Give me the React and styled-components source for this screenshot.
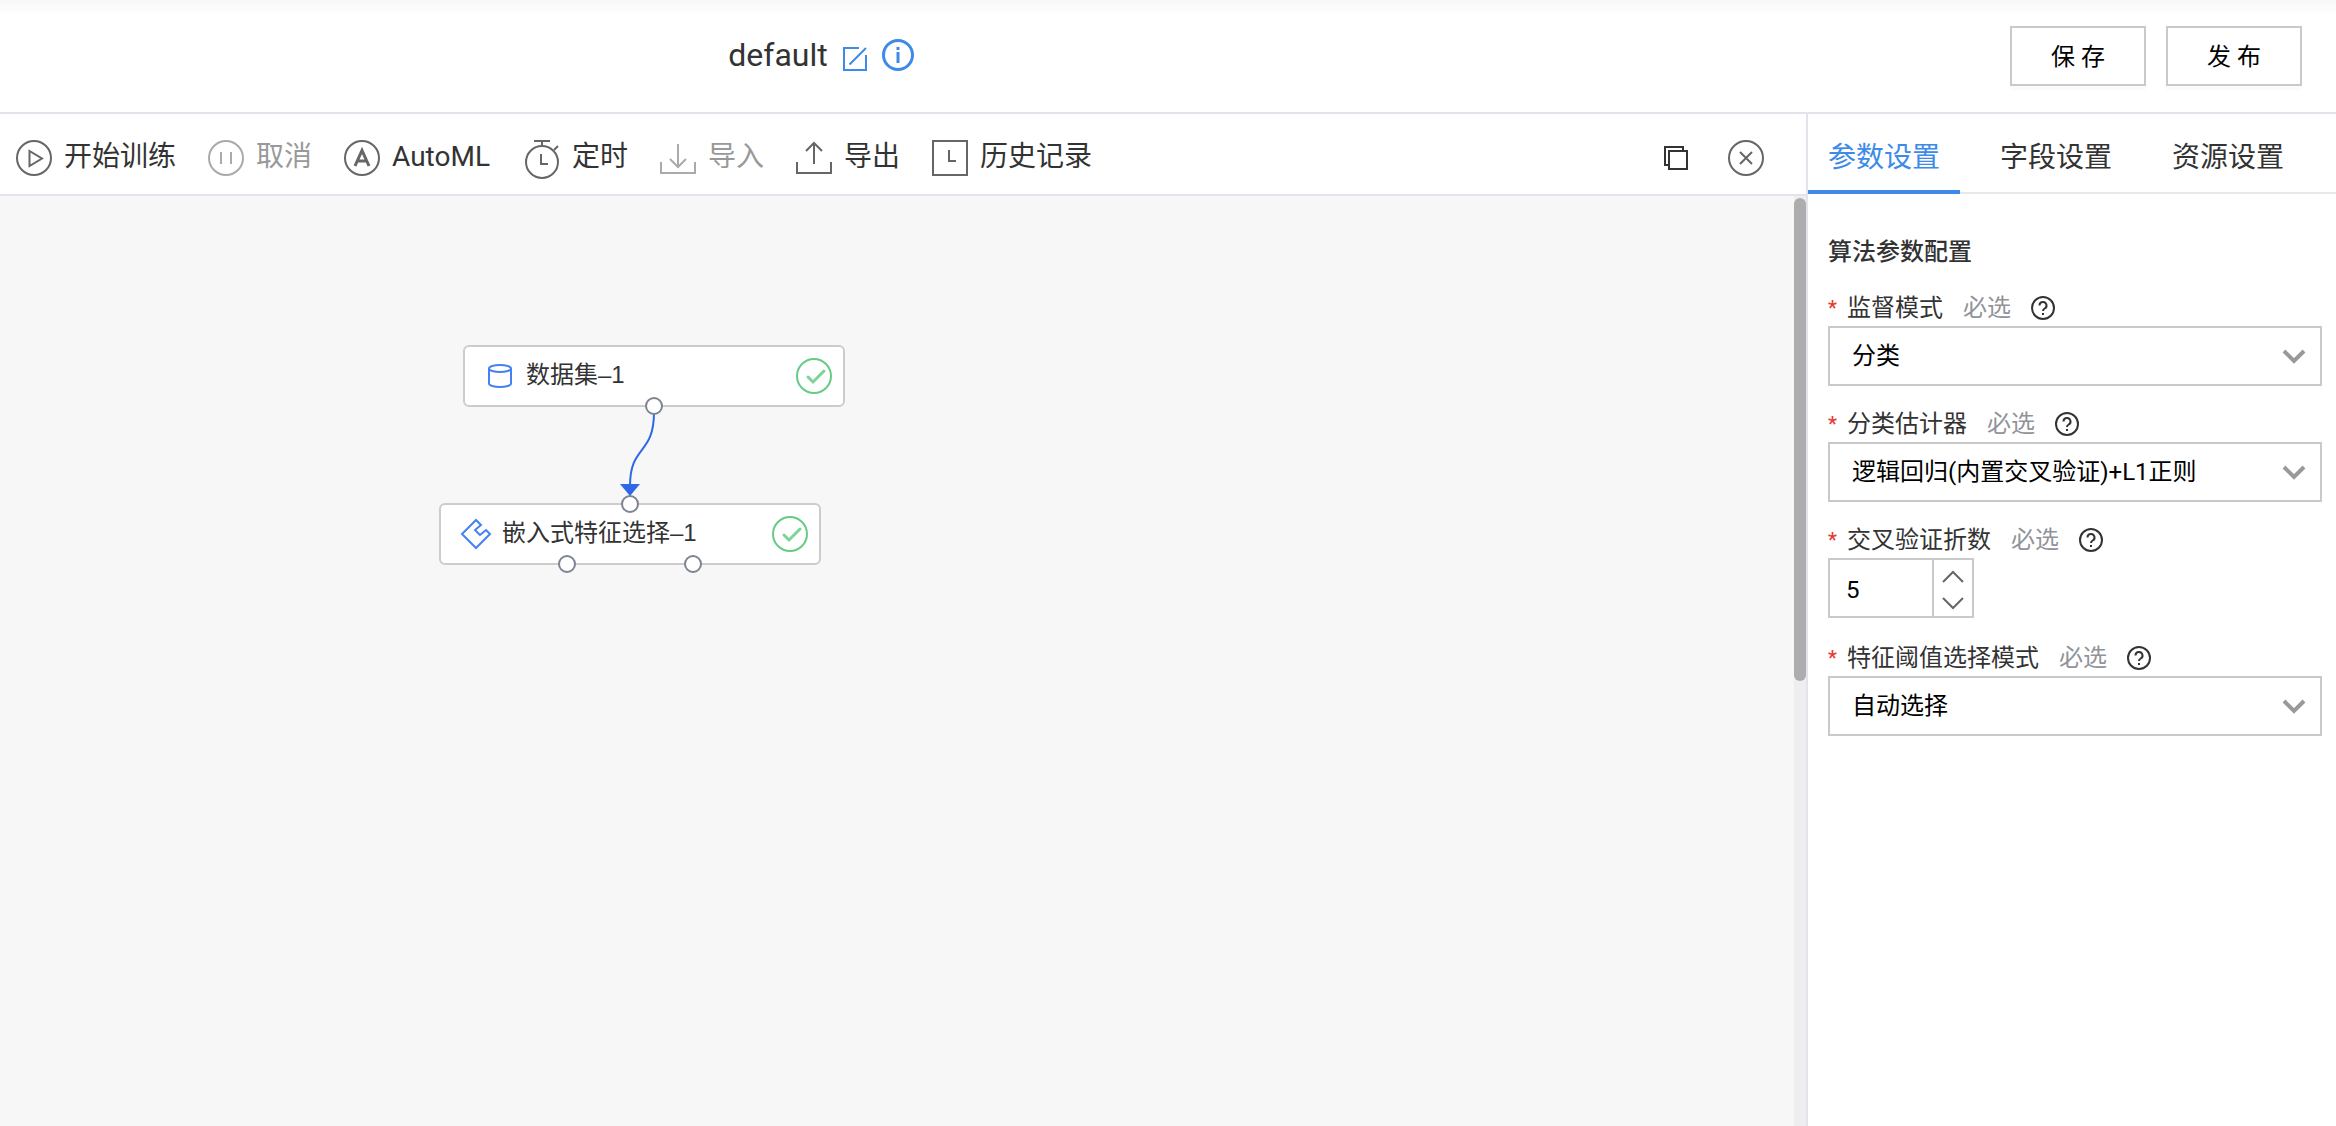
import React, { useState } from 'react';
import styled, { createGlobalStyle, css } from 'styled-components';

const GlobalStyle = createGlobalStyle`
  *, *::before, *::after {
    box-sizing: border-box;
  }

  body {
    margin: 0;
    background: #fff;
    color: #333;
    font-family: Roboto, "Noto Sans CJK SC", sans-serif;
    font-size: 24px;
  }

  button, input, select {
    font-family: inherit;
    font-size: inherit;
  }
`;

const Page = styled.div`
  display: flex;
  flex-direction: column;
  min-height: 100vh;
`;

const Header = styled.header`
  display: flex;
  align-items: center;
  height: 114px;
  border-bottom: 2px solid #e1e4eb;
  background: linear-gradient(#f7f7f7, #fff 16px);
`;

const TitleGroup = styled.div`
  display: flex;
  flex: 1;
  align-items: center;
  justify-content: center;
  padding-bottom: 2px;
`;

const Title = styled.h1`
  margin: 0 15px 0 0;
  font-size: 32px;
  font-weight: 400;
  line-height: 40px;
`;

const IconButton = styled.button`
  display: flex;
  padding: 0;
  border: 0;
  background: none;
  color: ${props => props.$color || '#666'};
  cursor: pointer;
`;

const TitleIcons = styled.div`
  display: flex;
  align-items: flex-end;
  gap: 15px;
`;

const HeaderActions = styled.div`
  display: flex;
  flex: 0 0 694px;
  justify-content: flex-end;
  gap: 20px;
  padding-right: 34px;
`;

const ActionButton = styled.button`
  width: 136px;
  height: 60px;
  padding: 0 0 4px;
  border: 2px solid #c9c9c9;
  background: #fff;
  box-shadow: 0 4px 0 rgba(0, 0, 0, 0.016);
  color: #000;
  cursor: pointer;
`;

const Body = styled.div`
  display: flex;
  flex: 1;
`;

const Workspace = styled.main`
  display: flex;
  flex: 1;
  flex-direction: column;
  min-width: 0;
`;

const Toolbar = styled.div`
  display: flex;
  align-items: center;
  gap: 32px;
  height: 82px;
  padding: 8px 42px 0 16px;
  border-bottom: 2px solid #e1e4eb;
`;

const ToolButton = styled.button`
  display: flex;
  align-items: center;
  gap: 12px;
  padding: 0;
  border: 0;
  background: none;
  color: #333;
  font-size: 28px;
  line-height: 36px;
  white-space: nowrap;
  cursor: pointer;

  svg {
    color: #666;
  }

  span {
    min-width: ${props => (props.$wide ? '100px' : '0')};
    padding-bottom: 2px;
    text-align: left;
  }

  &:disabled {
    color: #999;
    cursor: default;

    svg {
      color: #aaa;
    }
  }
`;

const ToolbarEnd = styled.div`
  display: flex;
  align-items: center;
  gap: 40px;
  margin-left: auto;
`;

const CanvasArea = styled.div`
  display: flex;
  flex: 1;
`;

const Canvas = styled.div`
  position: relative;
  flex: 1;
  overflow: hidden;
  background: #f7f7f7;
`;

const ScrollTrack = styled.div`
  width: 12px;
  padding-top: 2px;
  background: #eee;
`;

const ScrollThumb = styled.div`
  height: 52%;
  border-radius: 6px;
  background: #adadad;
`;

const Edge = styled.svg`
  position: absolute;
  left: 0;
  top: 0;
`;

const Node = styled.div`
  position: absolute;
  left: ${props => props.$x}px;
  top: ${props => props.$y}px;
  display: flex;
  align-items: center;
  gap: 11px;
  width: 382px;
  height: 62px;
  padding: 0 11px 0 20px;
  border: 2px solid #ccc;
  border-radius: 6px;
  background: #fff;
`;

const NodeName = styled.span`
  flex: 1;
  padding-bottom: 2px;
  font-family: "Liberation Sans", "Noto Sans CJK SC", sans-serif;
  line-height: 32px;
`;

const Port = styled.i`
  position: absolute;
  left: ${props => props.$at};
  ${props => (props.$side === 'top' ? css`top: -10px;` : css`bottom: -10px;`)}
  width: 18px;
  height: 18px;
  margin-left: -9px;
  border: 2px solid #7d8492;
  border-radius: 50%;
  background: #fff;
`;

const Panel = styled.aside`
  flex: 0 0 530px;
  border-left: 2px solid #e1e4eb;
`;

const TabList = styled.div`
  display: flex;
  gap: 20px;
  height: 80px;
  box-shadow: inset 0 -2px #e8e8e8;
`;

const Tab = styled.button`
  padding: 6px 20px 0;
  border: 0;
  border-bottom: 4px solid ${props => (props.$active ? '#3d8ae9' : 'transparent')};
  background: none;
  color: ${props => (props.$active ? '#3d8ae9' : '#333')};
  font-size: 28px;
  white-space: nowrap;
  cursor: pointer;
`;

const Form = styled.form`
  padding: 40px 14px 40px 20px;
`;

const FormTitle = styled.h2`
  margin: 0;
  font-size: 24px;
  font-weight: 500;
  line-height: 36px;
`;

const Field = styled.div`
  margin-top: 20px;
`;

const FieldHead = styled.div`
  display: flex;
  align-items: center;
  height: 36px;
`;

const Star = styled.span`
  width: 19px;
  color: #e43c34;
  font-size: 20px;
  font-weight: 500;
`;

const Label = styled.label`
  line-height: 36px;
`;

const Required = styled.span`
  margin: 0 20px;
  color: #909399;
  line-height: 36px;
`;

const SelectBox = styled.div`
  display: grid;
  align-items: center;

  > * {
    grid-area: 1 / 1;
  }

  svg {
    justify-self: end;
    margin-right: 16px;
    color: #999;
    pointer-events: none;
  }
`;

const Select = styled.select`
  width: 100%;
  height: 60px;
  padding: 0 48px 0 22px;
  border: 2px solid #c9c9c9;
  border-radius: 0;
  outline: none;
  appearance: none;
  background: #fff;
  color: #000;
`;

const NumberBox = styled.div`
  display: flex;
  width: 146px;
  height: 60px;
  margin-bottom: 22px;
  border: 2px solid #c9c9c9;
`;

const NumberInput = styled.input`
  flex: 1;
  min-width: 0;
  padding: 4px 0 0 16px;
  border: 0;
  outline: none;
  background: none;
  color: #000;
`;

const Stepper = styled.div`
  display: flex;
  flex-direction: column;
  justify-content: center;
  gap: 10px;
  width: 40px;
  padding-top: 4px;
  border-left: 2px solid #c9c9c9;

  button {
    justify-content: center;
  }
`;

const Svg = ({ size = 36, stroke = 2, children }) => (
  <svg
    width={size}
    height={size}
    viewBox={`0 0 ${size} ${size}`}
    fill="none"
    stroke="currentColor"
    strokeWidth={stroke}
    overflow="visible"
    aria-hidden="true"
  >
    {children}
  </svg>
);

const PlayIcon = () => (
  <Svg>
    <circle cx="18" cy="18" r="17" />
    <path d="M13.5 11v15L26 18.500z" />
  </Svg>
);

const PauseIcon = () => (
  <Svg>
    <circle cx="18" cy="18" r="17" />
    <path d="M13 12v12M23 12v12" />
  </Svg>
);

const AutoIcon = () => (
  <Svg>
    <circle cx="18" cy="18" r="17" />
    <path strokeWidth="3" d="M11 26l7-15.5L25 26M13.5 21h9" />
  </Svg>
);

const TimerIcon = () => (
  <Svg>
    <circle cx="18" cy="22" r="16" />
    <path d="M10 1h16M18 1v5M30 10l4-4M17 14v10h7" />
  </Svg>
);

const ImportIcon = () => (
  <Svg>
    <path d="M1 22v11h34V22M18 4v23M10 19l8 8 8-8" />
  </Svg>
);

const ExportIcon = () => (
  <Svg>
    <path d="M1 22v11h34V22M18 24V3M10 11l8-8 8 8" />
  </Svg>
);

const HistoryIcon = () => (
  <Svg>
    <path d="M1 1h34v34H1zM17 10v11h7" />
  </Svg>
);

const CopyIcon = () => (
  <Svg size={24}>
    <path d="M5 5h18v18H5zM5 19H1V1h18v4" />
  </Svg>
);

const CloseIcon = () => (
  <Svg>
    <circle cx="18" cy="18" r="17" />
    <path d="M12 12l12 12M24 12L12 24" />
  </Svg>
);

const EditIcon = () => (
  <Svg size={24}>
    <path d="M16 1H1v22h22V8M6.5 17.5L23 1" />
  </Svg>
);

const InfoIcon = () => (
  <Svg size={32} stroke={3}>
    <circle cx="16" cy="16" r="14.5" />
    <path d="M16 13v11M16 8v3" />
  </Svg>
);

const HelpIcon = () => (
  <Svg size={24}>
    <circle cx="12" cy="12" r="11" />
    <path d="M8.5 9.5a3.5 3.5 0 1 1 5.2 3c-1.2.7-1.7 1.2-1.7 2.5M12 17v2" />
  </Svg>
);

const DatasetIcon = () => (
  <Svg size={30}>
    <ellipse cx="15" cy="7.5" rx="11" ry="3.5" />
    <path d="M4 7.5v15c0 2 5 3.500 11 3.500s11-1.500 11-3.500v-15" />
  </Svg>
);

const FeatureIcon = () => (
  <Svg size={30}>
    <path d="M15 1L1 15l14 14 14-14-4-4-6 5-5-5 6-5z" />
  </Svg>
);

const DoneIcon = () => (
  <Svg>
    <circle cx="18" cy="18" r="17" />
    <path strokeWidth="3" strokeLinecap="round" opacity="0.85" d="M12 19l5 5 11-11" />
  </Svg>
);

const ArrowIcon = ({ up, stroke = 2 }) => (
  <svg width="24" height="16" viewBox="0 0 24 16" fill="none" stroke="currentColor" strokeWidth={stroke} aria-hidden="true">
    <path d={up ? 'M2 13L12 3l10 10' : 'M2 3l10 10L22 3'} />
  </svg>
);

const tools = [
  { name: '开始训练', icon: <PlayIcon /> },
  { name: '取消', icon: <PauseIcon />, disabled: true },
  { name: 'AutoML', icon: <AutoIcon />, wide: true },
  { name: '定时', icon: <TimerIcon /> },
  { name: '导入', icon: <ImportIcon />, disabled: true },
  { name: '导出', icon: <ExportIcon /> },
  { name: '历史记录', icon: <HistoryIcon /> },
];

const tabs = ['参数设置', '字段设置', '资源设置'];

const FieldLabel = ({ id, children }) => (
  <FieldHead>
    <Star>*</Star>
    <Label htmlFor={id}>{children}</Label>
    <Required>必选</Required>
    <IconButton type="button" aria-label="帮助" $color="#333">
      <HelpIcon />
    </IconButton>
  </FieldHead>
);

const SelectField = ({ id, label, value }) => (
  <Field>
    <FieldLabel id={id}>{label}</FieldLabel>
    <SelectBox>
      <Select id={id}>
        <option>{value}</option>
      </Select>
      <ArrowIcon stroke={4} />
    </SelectBox>
  </Field>
);

const NumberField = ({ id, label, initial }) => {
  const [value, setValue] = useState(initial);

  return (
    <Field>
      <FieldLabel id={id}>{label}</FieldLabel>
      <NumberBox>
        <NumberInput id={id} type="text" inputMode="numeric" value={value} onChange={e => setValue(Number(e.target.value) || 0)} />
        <Stepper>
          <IconButton type="button" aria-label="增加" onClick={() => setValue(value + 1)}>
            <ArrowIcon up />
          </IconButton>
          <IconButton type="button" aria-label="减少" onClick={() => setValue(value - 1)}>
            <ArrowIcon />
          </IconButton>
        </Stepper>
      </NumberBox>
    </Field>
  );
};

const FlowNode = ({ x, y, name, icon, children }) => (
  <Node $x={x} $y={y}>
    <IconButton as="span" $color="#4680f5">{icon}</IconButton>
    <NodeName>{name}</NodeName>
    <IconButton as="span" $color="#67cb84">
      <DoneIcon />
    </IconButton>
    {children}
  </Node>
);

const App = () => {
  const [activeTab, setActiveTab] = useState(tabs[0]);

  return (
    <Page>
      <GlobalStyle />
      <Header>
        <TitleGroup>
          <Title>default</Title>
          <TitleIcons>
            <IconButton aria-label="编辑" $color="#3d8ae9"><EditIcon /></IconButton>
            <IconButton aria-label="信息" $color="#3d8ae9"><InfoIcon /></IconButton>
          </TitleIcons>
        </TitleGroup>
        <HeaderActions>
          <ActionButton>保 存</ActionButton>
          <ActionButton>发 布</ActionButton>
        </HeaderActions>
      </Header>
      <Body>
        <Workspace>
          <Toolbar>
            {tools.map(tool => (
              <ToolButton key={tool.name} disabled={tool.disabled} $wide={tool.wide}>
                {tool.icon}
                <span>{tool.name}</span>
              </ToolButton>
            ))}
            <ToolbarEnd>
              <IconButton aria-label="复制" $color="#333"><CopyIcon /></IconButton>
              <IconButton aria-label="关闭"><CloseIcon /></IconButton>
            </ToolbarEnd>
          </Toolbar>
          <CanvasArea>
            <Canvas>
              <Edge width="900" height="400" fill="none" aria-hidden="true">
                <path d="M654 216C654 260 630 248 630 290" stroke="#2f68e6" strokeWidth="2" />
                <path d="M620 288h20l-10 12z" fill="#2f68e6" />
              </Edge>
              <FlowNode x={463} y={149} name="数据集–1" icon={<DatasetIcon />}>
                <Port $at="50%" $side="bottom" />
              </FlowNode>
              <FlowNode x={439} y={307} name="嵌入式特征选择–1" icon={<FeatureIcon />}>
                <Port $at="50%" $side="top" />
                <Port $at="33.3%" $side="bottom" />
                <Port $at="66.6%" $side="bottom" />
              </FlowNode>
            </Canvas>
            <ScrollTrack>
              <ScrollThumb />
            </ScrollTrack>
          </CanvasArea>
        </Workspace>
        <Panel>
          <TabList role="tablist">
            {tabs.map(tab => (
              <Tab key={tab} role="tab" aria-selected={tab === activeTab} $active={tab === activeTab} onClick={() => setActiveTab(tab)}>
                {tab}
              </Tab>
            ))}
          </TabList>
          <Form>
            <FormTitle>算法参数配置</FormTitle>
            <SelectField id="mode" label="监督模式" value="分类" />
            <SelectField id="estimator" label="分类估计器" value="逻辑回归(内置交叉验证)+L1正则" />
            <NumberField id="folds" label="交叉验证折数" initial={5} />
            <SelectField id="threshold" label="特征阈值选择模式" value="自动选择" />
          </Form>
        </Panel>
      </Body>
    </Page>
  );
};

export default App;
